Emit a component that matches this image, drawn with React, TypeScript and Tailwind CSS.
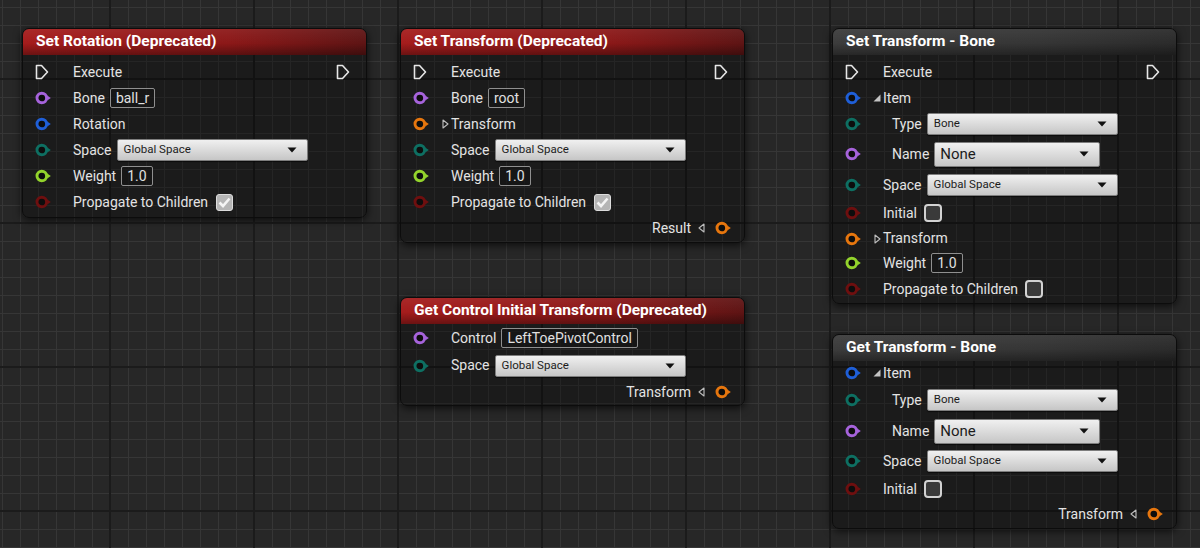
import React from 'react';

type PinColor = 'purple' | 'blue' | 'teal' | 'green' | 'red' | 'orange';
const COLORS: Record<PinColor, string> = {
  purple: '#a663db',
  blue: '#1f5fd8',
  teal: '#0e6f62',
  green: '#93d32c',
  red: '#6e0f0f',
  orange: '#e6760e',
};

function Pin({ c }: { c: PinColor }) {
  const col = COLORS[c];
  return (
    <svg width="18" height="14" viewBox="0 0 18 14" className="shrink-0">
      <circle cx="6.8" cy="7" r="4.8" fill="#0d0d0d" stroke={col} strokeWidth="2.9" />
      <path d="M12.2 4.4 L15.8 7 L12.2 9.6 Z" fill={col} />
    </svg>
  );
}

function Exec() {
  return (
    <svg width="14" height="16" viewBox="0 0 14 16" className="shrink-0">
      <path
        d="M1.5 1.5 H6.5 L12.5 8 L6.5 14.5 H1.5 Z"
        fill="none"
        stroke="#e6e6e6"
        strokeWidth="1.6"
        strokeLinejoin="round"
      />
    </svg>
  );
}

function Collapsed() {
  return (
    <svg width="7" height="10" viewBox="0 0 7 10" className="shrink-0">
      <path d="M1 1 L6 5 L1 9 Z" fill="none" stroke="#bdbdbd" strokeWidth="1.1" strokeLinejoin="round" />
    </svg>
  );
}

function Expanded() {
  return (
    <svg width="8" height="8" viewBox="0 0 8 8" className="shrink-0">
      <path d="M7.5 0.5 L7.5 7.5 L0.5 7.5 Z" fill="#c4c4c4" />
    </svg>
  );
}

function BackArrow() {
  return (
    <svg width="7" height="10" viewBox="0 0 7 10" className="shrink-0">
      <path d="M6 1 L1 5 L6 9 Z" fill="none" stroke="#bdbdbd" strokeWidth="1.1" strokeLinejoin="round" />
    </svg>
  );
}

function Caret() {
  return (
    <svg width="10" height="6" viewBox="0 0 10 6" className="shrink-0">
      <path d="M0.5 0.5 L9.5 0.5 L5 5.5 Z" fill="#111" />
    </svg>
  );
}

function Dropdown({ text, w, big }: { text: string; w: string; big?: boolean }) {
  return (
    <div
      className={`${w} ${big ? 'h-[25px] text-[15px] pl-[5px] pr-[10px]' : 'h-[22px] text-[11.5px] pl-[6px] pr-[10px]'} flex items-center justify-between rounded-[2px] border border-[#7d7d7d] bg-[linear-gradient(to_bottom,#f0f0f0,#c6c6c6)] text-[#1c1c1c] shadow-[0_1px_1px_rgba(0,0,0,0.6)]`}
    >
      <span>{text}</span>
      <Caret />
    </div>
  );
}

function TextBox({ text }: { text: string }) {
  return (
    <div className="h-[20px] flex items-center px-[5px] rounded-[2px] border border-[#8f8f8f] text-[14px] text-[#e0e0e0] bg-[#141414]/60">
      {text}
    </div>
  );
}

function Check({ checked }: { checked?: boolean }) {
  if (checked) {
    return (
      <div className="w-[17px] h-[17px] rounded-[3px] bg-[#b5b5b5] border border-[#dcdcdc] flex items-center justify-center">
        <svg width="13" height="11" viewBox="0 0 13 11">
          <path d="M1.5 5.5 L5 9 L11.5 1.5" fill="none" stroke="#f4f4f4" strokeWidth="2.6" />
        </svg>
      </div>
    );
  }
  return <div className="w-[18px] h-[18px] rounded-[4px] bg-[#3a3a3a] border-2 border-[#d2d2d2]" />;
}

function Label({ children }: { children: React.ReactNode }) {
  return <span className="text-[14px] text-[#e3e3e3] whitespace-nowrap">{children}</span>;
}

function Row({
  h,
  pin,
  exec,
  marker,
  children,
  right,
}: {
  h: string;
  pin?: PinColor;
  exec?: boolean;
  marker?: React.ReactNode;
  children?: React.ReactNode;
  right?: React.ReactNode;
}) {
  return (
    <div className={`${h} flex items-center`}>
      <div className="w-[50px] shrink-0 flex items-center pl-[12px]">
        {exec ? <Exec /> : pin ? <Pin c={pin} /> : null}
        {marker ? <div className="ml-auto mr-[2px] flex items-center">{marker}</div> : null}
      </div>
      <div className="flex items-center gap-[5px]">{children}</div>
      {right ? <div className="ml-auto flex items-center">{right}</div> : null}
    </div>
  );
}

function ExecOut() {
  return (
    <div className="pr-[16px] flex items-center">
      <Exec />
    </div>
  );
}

function OutPin({ label }: { label: string }) {
  return (
    <div className="flex items-center pr-[11px]">
      <Label>{label}</Label>
      <div className="ml-[7px] mr-[10px]">
        <BackArrow />
      </div>
      <Pin c="orange" />
    </div>
  );
}

function Node({
  x,
  y,
  title,
  red,
  children,
  pad,
}: {
  x: string;
  y: string;
  title: string;
  red?: boolean;
  children: React.ReactNode;
  pad: string;
}) {
  return (
    <div
      className={`absolute ${x} ${y} w-[345px] rounded-[7px] bg-black/30 border border-[#0c0c0c] shadow-[0_2px_8px_rgba(0,0,0,0.7)]`}
    >
      <div
        className={`h-[26px] rounded-t-[6px] flex items-center pl-[13px] text-[15.5px] font-bold text-white ${
          red
            ? 'bg-[image:linear-gradient(to_bottom,rgba(255,255,255,0.06),rgba(0,0,0,0)_55%,rgba(0,0,0,0.35)),linear-gradient(to_right,#a51c1c,#8c1818_60%,#5e1414)]'
            : 'bg-[image:linear-gradient(to_bottom,rgba(255,255,255,0.05),rgba(0,0,0,0)_55%,rgba(0,0,0,0.35)),linear-gradient(to_right,#3c3c3c,#353535_60%,#2b2b2b)]'
        }`}
      >
        {title}
      </div>
      <div className={pad}>{children}</div>
    </div>
  );
}

export default function App() {
  return (
    <div className="relative w-[1200px] h-[548px] overflow-hidden font-['Roboto','Noto_Sans',sans-serif] bg-[#272727] bg-[image:linear-gradient(to_right,#1b1b1b_2px,transparent_2px),linear-gradient(to_bottom,#1b1b1b_2px,transparent_2px),linear-gradient(to_right,#363636_1px,transparent_1px),linear-gradient(to_bottom,#363636_1px,transparent_1px)] bg-[size:144px_144px,144px_144px,18px_18px,18px_18px] bg-[position:109px_78px,109px_78px,2px_7px,2px_7px]">
      {/* Set Rotation (Deprecated) */}
      <Node x="left-[22px]" y="top-[28px]" title="Set Rotation (Deprecated)" red pad="pt-[4px] pb-[2px]">
        <Row h="h-[26px]" exec right={<ExecOut />}>
          <Label>Execute</Label>
        </Row>
        <Row h="h-[26px]" pin="purple">
          <Label>Bone</Label>
          <TextBox text="ball_r" />
        </Row>
        <Row h="h-[26px]" pin="blue">
          <Label>Rotation</Label>
        </Row>
        <Row h="h-[26px]" pin="teal">
          <Label>Space</Label>
          <Dropdown text="Global Space" w="w-[191px]" />
        </Row>
        <Row h="h-[26px]" pin="green">
          <Label>Weight</Label>
          <TextBox text="1.0" />
        </Row>
        <Row h="h-[26px]" pin="red">
          <Label>Propagate to Children</Label>
          <div className="ml-[3px]">
            <Check checked />
          </div>
        </Row>
      </Node>

      {/* Set Transform (Deprecated) */}
      <Node x="left-[400px]" y="top-[28px]" title="Set Transform (Deprecated)" red pad="pt-[4px] pb-[1px]">
        <Row h="h-[26px]" exec right={<ExecOut />}>
          <Label>Execute</Label>
        </Row>
        <Row h="h-[26px]" pin="purple">
          <Label>Bone</Label>
          <TextBox text="root" />
        </Row>
        <Row h="h-[26px]" pin="orange" marker={<Collapsed />}>
          <Label>Transform</Label>
        </Row>
        <Row h="h-[26px]" pin="teal">
          <Label>Space</Label>
          <Dropdown text="Global Space" w="w-[191px]" />
        </Row>
        <Row h="h-[26px]" pin="green">
          <Label>Weight</Label>
          <TextBox text="1.0" />
        </Row>
        <Row h="h-[26px]" pin="red">
          <Label>Propagate to Children</Label>
          <div className="ml-[3px]">
            <Check checked />
          </div>
        </Row>
        <Row h="h-[26px]" right={<OutPin label="Result" />} />
      </Node>

      {/* Get Control Initial Transform (Deprecated) */}
      <Node
        x="left-[400px]"
        y="top-[297px]"
        title="Get Control Initial Transform (Deprecated)"
        red
        pad="pt-[1px] pb-[1px]"
      >
        <Row h="h-[26px]" pin="purple">
          <Label>Control</Label>
          <TextBox text="LeftToePivotControl" />
        </Row>
        <Row h="h-[29px]" pin="teal">
          <Label>Space</Label>
          <Dropdown text="Global Space" w="w-[191px]" />
        </Row>
        <Row h="h-[24px]" right={<OutPin label="Transform" />} />
      </Node>

      {/* Set Transform - Bone */}
      <Node x="left-[832px]" y="top-[28px]" title="Set Transform - Bone" pad="pt-[4px] pb-[1px]">
        <Row h="h-[26px]" exec right={<ExecOut />}>
          <Label>Execute</Label>
        </Row>
        <Row h="h-[26px]" pin="blue" marker={<Expanded />}>
          <Label>Item</Label>
        </Row>
        <Row h="h-[26px]" pin="teal">
          <div className="pl-[9px] flex items-center gap-[5px]">
            <Label>Type</Label>
            <Dropdown text="Bone" w="w-[191px]" />
          </div>
        </Row>
        <Row h="h-[34px]" pin="purple">
          <div className="pl-[9px] flex items-center gap-[5px]">
            <Label>Name</Label>
            <Dropdown text="None" w="w-[166px]" big />
          </div>
        </Row>
        <Row h="h-[28px]" pin="teal">
          <Label>Space</Label>
          <Dropdown text="Global Space" w="w-[191px]" />
        </Row>
        <Row h="h-[28px]" pin="red">
          <Label>Initial</Label>
          <div className="ml-[2px]">
            <Check />
          </div>
        </Row>
        <Row h="h-[23px]" pin="orange" marker={<Collapsed />}>
          <Label>Transform</Label>
        </Row>
        <Row h="h-[26px]" pin="green">
          <Label>Weight</Label>
          <TextBox text="1.0" />
        </Row>
        <Row h="h-[26px]" pin="red">
          <Label>Propagate to Children</Label>
          <div className="ml-[2px]">
            <Check />
          </div>
        </Row>
      </Node>

      {/* Get Transform - Bone */}
      <Node x="left-[832px]" y="top-[334px]" title="Get Transform - Bone" pad="pt-[0px] pb-[3px]">
        <Row h="h-[24px]" pin="blue" marker={<Expanded />}>
          <Label>Item</Label>
        </Row>
        <Row h="h-[30px]" pin="teal">
          <div className="pl-[9px] flex items-center gap-[5px]">
            <Label>Type</Label>
            <Dropdown text="Bone" w="w-[191px]" />
          </div>
        </Row>
        <Row h="h-[32px]" pin="purple">
          <div className="pl-[9px] flex items-center gap-[5px]">
            <Label>Name</Label>
            <Dropdown text="None" w="w-[166px]" big />
          </div>
        </Row>
        <Row h="h-[28px]" pin="teal">
          <Label>Space</Label>
          <Dropdown text="Global Space" w="w-[191px]" />
        </Row>
        <Row h="h-[28px]" pin="red">
          <Label>Initial</Label>
          <div className="ml-[2px]">
            <Check />
          </div>
        </Row>
        <Row h="h-[22px]" right={<OutPin label="Transform" />} />
      </Node>
    </div>
  );
}
